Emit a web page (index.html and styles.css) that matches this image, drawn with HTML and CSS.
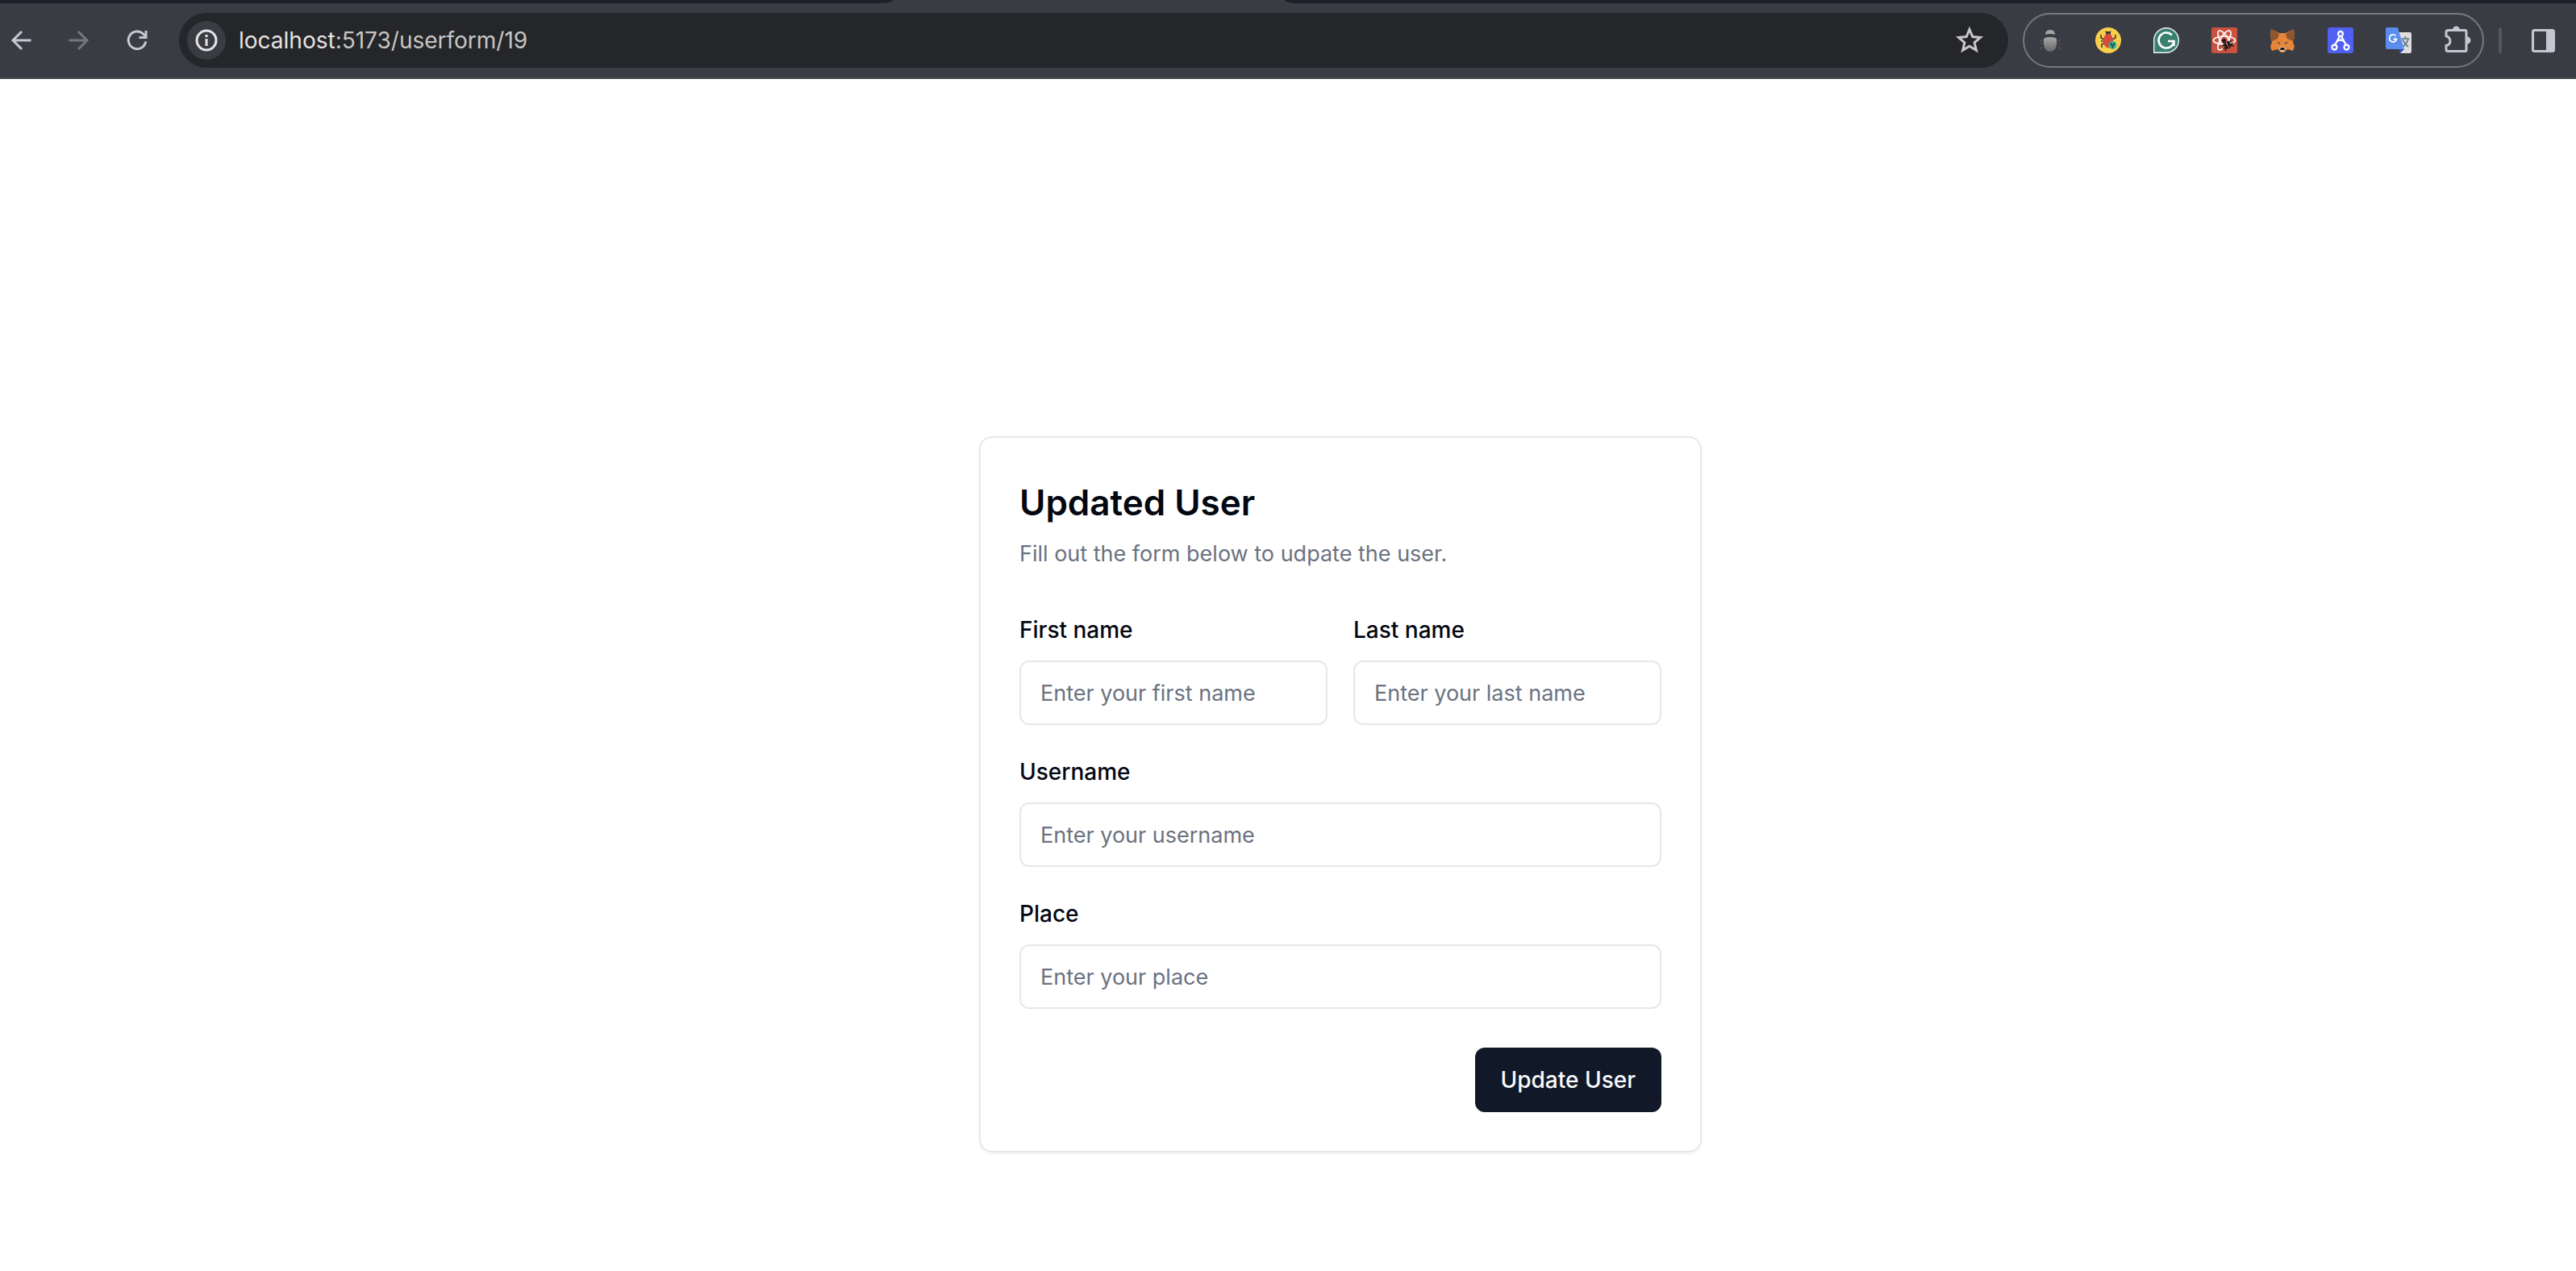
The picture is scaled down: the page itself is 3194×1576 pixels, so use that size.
FILE: index.html
```html
<!DOCTYPE html>
<html lang="en">
<head>
  <meta charset="utf-8">
  <title>User form</title>
  <link rel="stylesheet" href="styles.css">
</head>
<body>
  <header class="browser">
    <div class="tabs"><span class="tabs-before"></span><span class="tabs-active"></span><span class="tabs-after"></span></div>
    <div class="toolbar">
      <nav class="nav" aria-label="History">
        <button class="icon-button" type="button" aria-label="Back"><svg class="icon" viewBox="0 0 32 32" fill="none" stroke="#c4c7d0" stroke-width="3"><path d="M28.500 16H6M17 5L6 16l11 11"/></svg></button>
        <button class="icon-button" type="button" aria-label="Forward" disabled><svg class="icon" viewBox="0 0 32 32" fill="none" stroke="#77777a" stroke-width="3"><path d="M3.500 16h22.500M15 5l11 11-11 11"/></svg></button>
        <button class="icon-button" type="button" aria-label="Reload"><svg class="icon" viewBox="0 0 32 32" fill="none" stroke="#c4c7d0" stroke-width="3"><path d="M26.700 17.500A10.800 10.800 0 1 1 24 8.500l2 2"/><path d="M28.500 4v10h-10v-3h7V4z" fill="#c4c7d0" stroke="none"/></svg></button>
      </nav>
      <div class="address">
        <button class="site-info" type="button" aria-label="Site information"><svg class="icon" viewBox="0 0 32 32"><circle cx="16" cy="16" r="12" fill="none" stroke="#e6e3e1" stroke-width="3"/><path d="M14.500 14h3v9h-3zM14.500 9h3v3h-3z" fill="#e6e3e1"/></svg></button>
        <a class="url" href="#"><span class="url-host">localhost</span>:5173/userform/19</a>
        <button class="icon-button" type="button" aria-label="Bookmark"><svg class="icon" viewBox="0 0 32 32"><path d="M16 2.500l3.800 9.100 9.700.8-7.400 6.400 2.300 9.600-8.400-5.100-8.400 5.100 2.300-9.600-7.400-6.400 9.700-.8z" fill="none" stroke="#c7c6c8" stroke-width="3"/></svg></button>
      </div>
      <div class="extensions">
        <button class="icon-button" type="button" aria-label="Debugger"><svg class="icon" viewBox="0 0 32 32"><defs><linearGradient id="shell" x2="0" y2="1"><stop stop-color="#a8a8a8"/><stop offset="1" stop-color="#666"/></linearGradient></defs><path d="M10 9q0-6 6-6t6 6q-6-2-12 0z" fill="#a5a5a5"/><path d="M8 15q0-3 8-3t8 3q1 15-8 15T8 15z" fill="url(#shell)"/><path d="M3 15l2 2h2M3 20h3M4 27v-2h3M29 15l-2 2h-2M29 20h-3M28 27v-2h-3" fill="none" stroke="#5c5d60"/></svg></button>
        <button class="icon-button" type="button" aria-label="Bug finder"><svg class="icon" viewBox="0 0 32 32"><circle cx="16" cy="16" r="16" fill="#f7cf4b"/><path d="M7 9v4l4 2M7 17h5M8 25v-4l4-2M25 9v4l-4 2" fill="none" stroke="#30383b" stroke-width="1.500"/><path d="M13 9V6l-1-2 2 1h4l2-1-1 2v3z" fill="#30383b"/><ellipse cx="16" cy="16.500" rx="6" ry="9" fill="#d64a40"/><circle cx="21.500" cy="22" r="5" fill="#38bd91"/><path d="M19.500 19v2q2 3 4 0v-2M21.500 22v4" fill="none" stroke="#234b50" stroke-width="1.800"/></svg></button>
        <button class="icon-button" type="button" aria-label="Grammar"><svg class="icon" viewBox="0 0 32 32"><path d="M.700 31.300V16A15.300 15.300 0 1 1 16 31.300z" fill="#39806f" stroke="#eef6f3" stroke-width="1.400"/><path d="M23 9.500A9.500 9.500 0 1 0 25.500 17H18M25.500 17v6" fill="none" stroke="#fff" stroke-width="2.600"/></svg></button>
        <button class="icon-button" type="button" aria-label="Component inspector"><svg class="icon" viewBox="0 0 32 32"><rect width="32" height="32" rx="2" fill="#cb5240"/><g fill="none" stroke="#fff" stroke-width="1.700"><ellipse cx="16" cy="16" rx="13.500" ry="5"/><ellipse cx="16" cy="16" rx="13.500" ry="5" transform="rotate(60 16 16)"/><ellipse cx="16" cy="16" rx="13.500" ry="5" transform="rotate(120 16 16)"/></g><path d="M14 21h12l2 9H15z" fill="#cb5240"/><g transform="rotate(-30 20 22)" fill="#201b1b"><circle cx="19" cy="15" r="2.600"/><path d="M16 18h3.500v9l-3.500-2zM20.500 18H24v7l-3.500 2z"/><path d="M13 19l3 1M13 23h3M14 27l2-3M27 19l-3 1M27 23h-3M26 27l-2-3" stroke="#201b1b" stroke-width="1.500"/></g></svg></button>
        <button class="icon-button" type="button" aria-label="Wallet"><svg class="icon" viewBox="0 0 32 32"><path d="M2 2l10 5h8l10-5 1 9-2 7 2 6-2 5-7-2-4 4h-4l-4-4-7 2-2-5 2-6-2-7z" fill="#e58638"/><path d="M2 2l10 6-2 6-7 3-2-6zM30 2L20 8l2 6 7 3 2-6z" fill="#8e5530"/><path d="M12 26l2-2h4l2 2-2 4h-4z" fill="#d8c6b5"/><path d="M14 25h4l1 3h-6z" fill="#16181b"/><path d="M9 18l4 1-1 2zM23 18l-4 1 1 2z" fill="#344453"/></svg></button>
        <button class="icon-button" type="button" aria-label="Graph tools"><svg class="icon" viewBox="0 0 32 32"><rect width="32" height="32" rx="3" fill="#4f60f3"/><g fill="none" stroke="#fff" stroke-width="2.300"><circle cx="16" cy="8" r="3"/><circle cx="8.500" cy="24.500" r="3"/><circle cx="23.500" cy="24.500" r="3"/><path d="M15 11L9.500 21M17 11l5.500 10M12 17q4-3 8 0"/></g></svg></button>
        <button class="icon-button" type="button" aria-label="Translate"><svg class="icon" viewBox="0 0 32 32"><path d="M15 6h15q2 0 2 2v22q0 2-2 2H18z" fill="#dedede"/><path d="M19.500 14h10M24.500 11v3M28 14q-2 7-7 10M21 15q3 6 7 9" fill="none" stroke="#607d86" stroke-width="1.700"/><path d="M16 27h7l-5 5z" fill="#3949b5"/><path d="M2 0h13l8 27H2q-2 0-2-2V2q0-2 2-2z" fill="#5a8dee"/><path d="M12.500 10.500a4.500 4.500 0 1 0 1 4h-4" fill="none" stroke="#fff" stroke-width="1.800"/></svg></button>
        <button class="icon-button" type="button" aria-label="Extensions"><svg class="icon" viewBox="0 0 32 32"><path d="M6 3.500h20q2 0 2 2v23q0 1-2 1H5q-2 0-2-2v-5q5-1 5-5.500T3 10.500v-5q0-2 3-2z" fill="none" stroke="#c4c7d0" stroke-width="3"/><path d="M11 3a4.500 4.500 0 0 1 9 0zM29 11.500a4.500 4.500 0 0 1 0 9z" fill="#c4c7d0"/></svg></button>
      </div>
      <span class="divider"></span>
      <button class="icon-button" type="button" aria-label="Side panel"><svg class="icon" viewBox="0 0 32 32"><rect x="2.500" y="3.500" width="26" height="26" rx="2" fill="none" stroke="#c4c7d0" stroke-width="3"/><path d="M19 3h9v26h-9z" fill="#c4c7d0"/></svg></button>
    </div>
  </header>
  <main class="page">
    <section class="card">
      <h1 class="title">Updated User</h1>
      <p class="description">Fill out the form below to udpate the user.</p>
      <form class="form">
        <div class="name-row">
          <div class="field"><label class="label" for="first">First name</label><input class="input" id="first" type="text" placeholder="Enter your first name"></div>
          <div class="field"><label class="label" for="last">Last name</label><input class="input" id="last" type="text" placeholder="Enter your last name"></div>
        </div>
        <div class="field"><label class="label" for="username">Username</label><input class="input" id="username" type="text" placeholder="Enter your username"></div>
        <div class="field"><label class="label" for="place">Place</label><input class="input" id="place" type="text" placeholder="Enter your place"></div>
        <button class="submit" type="submit">Update User</button>
      </form>
    </section>
  </main>
</body>
</html>
```
FILE: styles.css
```css
* { box-sizing: border-box; }

body {
  margin: 0;
  background: #fff;
  color: #030711;
  font: 28px/40px Inter, "Liberation Sans", sans-serif;
}

button, input { font: inherit; }

.browser { background: #3a3c44; border-bottom: 2px solid #48484a; }

.tabs { display: flex; height: 4px; }
.tabs-before { flex: 1107; background: #1d2029; border-bottom-right-radius: 14px 4px; }
.tabs-active { flex: 486; }
.tabs-after { flex: 1601; background: #1d2029; border-bottom-left-radius: 14px 4px; }

.toolbar {
  display: flex;
  align-items: center;
  gap: 18px;
  padding: 12px 24px 12px 10px;
}

.nav { display: flex; gap: 40px; margin-right: 18px; }

.icon-button {
  flex: none;
  width: 32px;
  height: 32px;
  padding: 0;
  border: 0;
  background: none;
}

.icon { display: block; width: 32px; height: 32px; overflow: visible; }

.address {
  flex: 1;
  display: flex;
  align-items: center;
  height: 68px;
  padding: 0 32px 0 10px;
  border-radius: 34px;
  background: #25262a;
}

.site-info {
  width: 48px;
  height: 48px;
  padding: 8px;
  border: 0;
  border-radius: 50%;
  background: #3a3c44;
}

.url {
  flex: 1;
  margin-left: 16px;
  color: #c7c5c3;
  text-decoration: none;
}
.url-host { color: #e6e3e1; }

.extensions {
  display: flex;
  align-items: center;
  gap: 40px;
  height: 68px;
  padding: 0 16px;
  border: 2px solid #7a7778;
  border-radius: 34px;
}

.divider { width: 4px; height: 32px; border-radius: 2px; background: #54565f; }
.divider + .icon-button { margin-left: 18px; }

.page { display: flex; justify-content: center; padding: 443px 0 48px 130px; }

.card {
  width: 896px;
  padding: 48px;
  border: 2px solid #e5e7eb;
  border-radius: 16px;
  box-shadow: 0 2px 4px rgba(0, 0, 0, 0.05);
}

.title { margin: 0 0 12px; font-size: 44px; line-height: 64px; font-weight: 600; }
.description { margin: 0 0 60px; color: #6b7280; font-size: 27px; }

.form { display: flex; flex-direction: column; gap: 44px; }
.name-row { display: grid; grid-template-columns: 1fr 1fr; gap: 32px; }
.field { display: flex; flex-direction: column; gap: 24px; }
.label { line-height: 28px; font-weight: 500; }

.input {
  width: 100%;
  height: 80px;
  padding: 0 24px;
  border: 2px solid #e5e7eb;
  border-radius: 12px;
  background: #fff;
  color: inherit;
  font-size: 27px;
}
.input::placeholder { color: #6b7280; opacity: 1; }

.submit {
  align-self: flex-end;
  height: 80px;
  margin-top: 4px;
  padding: 0 32px;
  border: 0;
  border-radius: 12px;
  background: #111827;
  color: #f9fafb;
  font-weight: 500;
}
```
